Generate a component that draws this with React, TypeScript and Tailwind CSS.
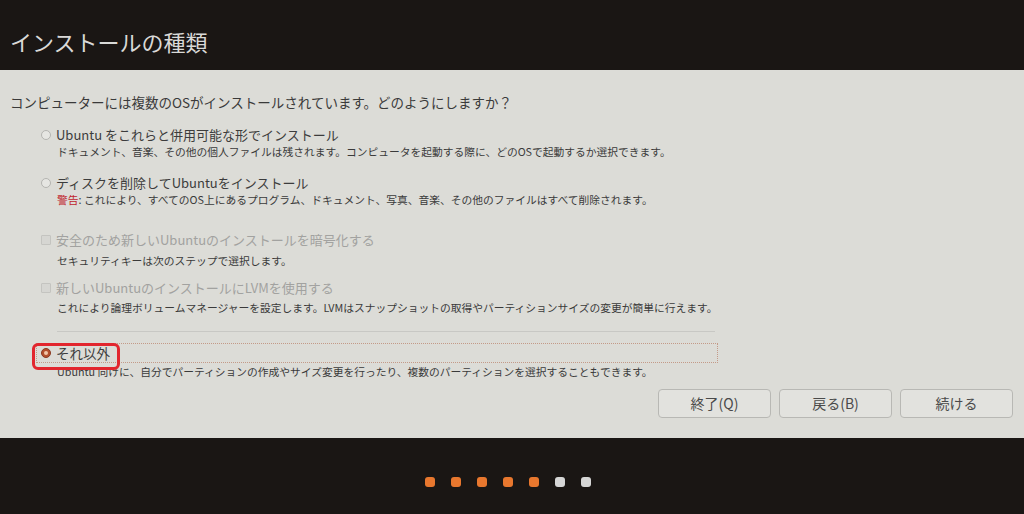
import React from 'react';

const desc = 'text-[10.75px] leading-[16px] text-[#3a3a3a] pl-[57px] whitespace-nowrap';

function Radio({ checked = false }: { checked?: boolean }) {
  if (checked) {
    return (
      <span className="w-[10px] h-[10px] rounded-full bg-[#b4502e] border border-[#8a3a22] flex items-center justify-center shrink-0">
        <span className="w-[4px] h-[4px] rounded-full bg-[#f2c6a8]" />
      </span>
    );
  }
  return <span className="w-[10px] h-[10px] rounded-full bg-[#e6e6e2] border border-[#b4b4b0] shrink-0" />;
}

function Check() {
  return <span className="w-[10px] h-[10px] rounded-[1px] bg-[#d6d6d2] border border-[#c4c4c0] shrink-0" />;
}

function Option({
  control,
  label,
  disabled = false,
}: {
  control: React.ReactNode;
  label: string;
  disabled?: boolean;
}) {
  return (
    <div className="flex items-center h-[18px] pl-[41px] gap-[5px]">
      {control}
      <span className={`text-[13px] leading-[18px] whitespace-nowrap ${disabled ? 'text-[#a2a2a0]' : 'text-[#3c3c3c]'}`}>
        {label}
      </span>
    </div>
  );
}

export default function App() {
  const buttons = ['終了(Q)', '戻る(B)', '続ける'];
  const dots = ['o', 'o', 'o', 'o', 'o', 'w', 'w'];

  return (
    <div className="w-[1024px] h-[514px] bg-[#1a1614] flex flex-col font-['Noto_Sans_CJK_JP',sans-serif] overflow-hidden">
      <header className="h-[70px] flex items-end pl-[10px] pb-[14px]">
        <h1 className="text-[22px] leading-[30px] text-[#d9d9d7]">インストールの種類</h1>
      </header>

      <main className="h-[368px] bg-[#dcdcd7] flex flex-col pt-[22px]">
        <p className="pl-[10px] text-[13.5px] leading-[20px] text-[#3a3a3a] whitespace-nowrap">
          コンピューターには複数のOSがインストールされています。どのようにしますか？
        </p>

        <div className="mt-[14px]">
          <Option control={<Radio />} label="Ubuntu をこれらと併用可能な形でインストール" />
        </div>
        <p className={desc}>
          ドキュメント、音楽、その他の個人ファイルは残されます。コンピュータを起動する際に、どのOSで起動するか選択できます。
        </p>

        <div className="mt-[14px]">
          <Option control={<Radio />} label="ディスクを削除してUbuntuをインストール" />
        </div>
        <p className={desc}>
          <span className="text-[#c0242c]">警告</span>: これにより、すべてのOS上にあるプログラム、ドキュメント、写真、音楽、その他のファイルはすべて削除されます。
        </p>

        <div className="mt-[23px]">
          <Option control={<Check />} label="安全のため新しいUbuntuのインストールを暗号化する" disabled />
        </div>
        <p className={`${desc} mt-[4px]`}>セキュリティキーは次のステップで選択します。</p>

        <div className="mt-[10px]">
          <Option control={<Check />} label="新しいUbuntuのインストールにLVMを使用する" disabled />
        </div>
        <p className={`${desc} mt-[3px]`}>
          これにより論理ボリュームマネージャーを設定します。LVMはスナップショットの取得やパーティションサイズの変更が簡単に行えます。
        </p>

        <div className="ml-[57px] mt-[15px] w-[658px] h-px bg-[#c8c8c4]" />

        <div className="relative ml-[36px] mt-[11px] w-[682px] h-[20px] border border-dotted border-[#c49a88] flex items-center pl-[4px] gap-[5px]">
          <Radio checked />
          <span className="text-[13.5px] leading-[18px] text-[#3c3c3c]">それ以外</span>
          <div className="absolute left-[-5px] top-[-1px] w-[88px] h-[27px] border-[3px] border-[#e2262e] rounded-[6px]" />
        </div>
        <p className={`${desc} mt-[1px]`}>
          Ubuntu 向けに、自分でパーティションの作成やサイズ変更を行ったり、複数のパーティションを選択することもできます。
        </p>

        <div className="flex justify-end gap-[8px] pr-[11px] mt-[9px]">
          {buttons.map((b) => (
            <button
              key={b}
              className="w-[113px] h-[29px] rounded-[4px] border border-[#b8b8b4] bg-[#e2e2de] text-[14px] text-[#4a4a4a]"
            >
              {b}
            </button>
          ))}
        </div>
      </main>

      <footer className="flex-1 flex justify-center items-start pt-[39px] pr-[8px] gap-[16px]">
        {dots.map((d, i) => (
          <span
            key={i}
            className={`w-[10px] h-[10px] rounded-[3px] ${d === 'o' ? 'bg-[#e8772e]' : 'bg-[#d6d6d6]'}`}
          />
        ))}
      </footer>
    </div>
  );
}
